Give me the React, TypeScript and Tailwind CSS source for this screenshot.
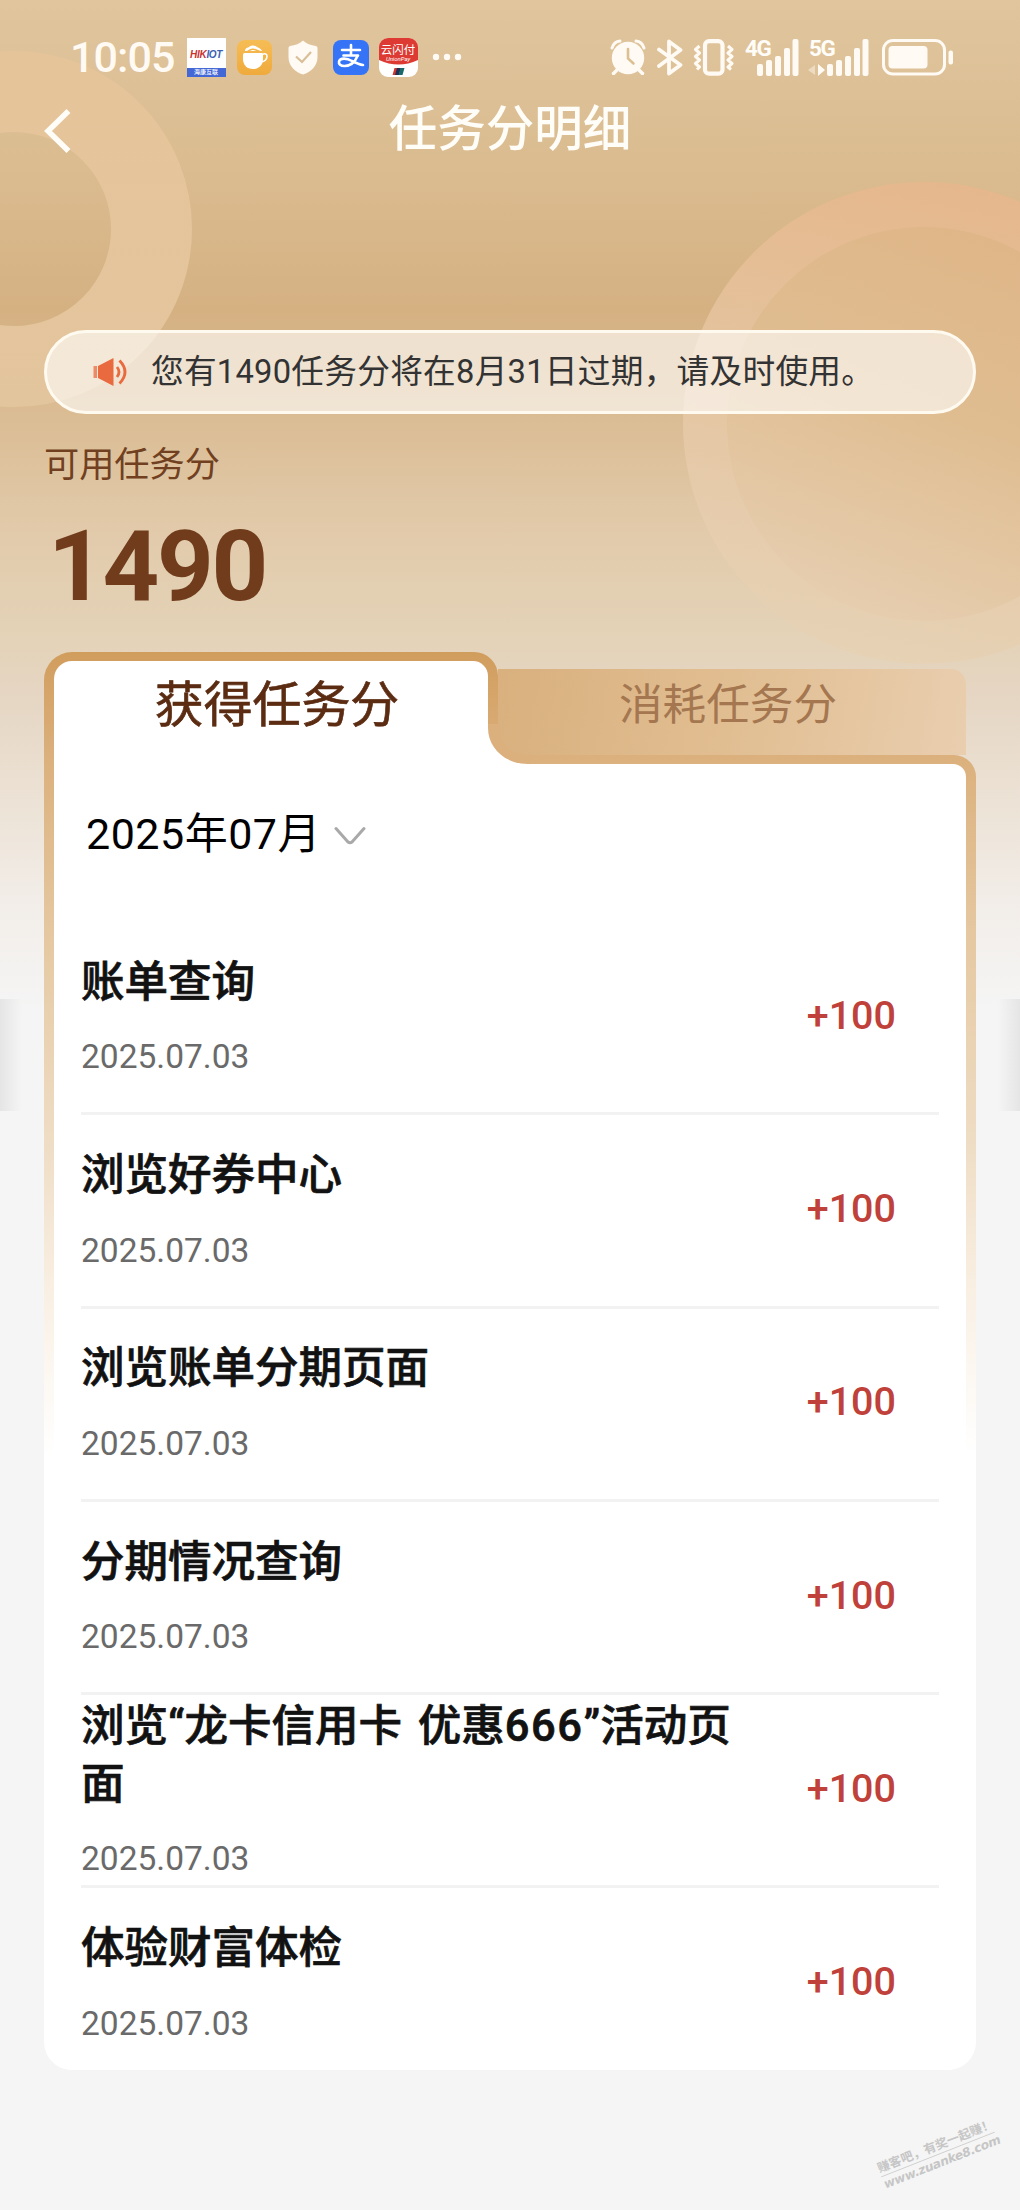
import React from "react";

const records = [
  { title: "账单查询", date: "2025.07.03", points: "+100" },
  { title: "浏览好券中心", date: "2025.07.03", points: "+100" },
  { title: "浏览账单分期页面", date: "2025.07.03", points: "+100" },
  { title: "分期情况查询", date: "2025.07.03", points: "+100" },
  { title: "浏览“龙卡信用卡 优惠666”活动页面", date: "2025.07.03", points: "+100" },
  { title: "体验财富体检", date: "2025.07.03", points: "+100" },
];

function AppBadges() {
  return (
    <div className="flex items-center">
      <div className="ml-[12px] flex h-[39px] w-[39px] flex-col overflow-hidden bg-white">
        <div className="flex h-[30px] items-center justify-center pt-[5px] font-['Liberation_Sans'] text-[10px] font-bold italic leading-none tracking-[-0.3px]">
          <span className="text-[#c8332f]">HIK</span>
          <span className="text-[#3a62b4]">IOT</span>
        </div>
        <div className="flex h-[9px] items-center justify-center bg-[#4368d6] text-[6px] font-medium leading-none text-white">海康互联</div>
      </div>
      <svg className="ml-[11px]" width="35" height="35" viewBox="0 0 35 35">
        <defs>
          <linearGradient id="cup" x1="0" y1="0" x2="0" y2="1">
            <stop offset="0" stopColor="#f6bd55" />
            <stop offset="1" stopColor="#efaa3c" />
          </linearGradient>
        </defs>
        <rect width="35" height="35" rx="8" fill="url(#cup)" />
        <path d="M8 11c0-3 3-3.500 4-4 2-2 6-2 8 0 2 1 4 1.500 5 4z" fill="#fff" />
        <path d="M8 12q3-.5 5-2 3-1.500 6 0 3 1.500 6 2" stroke="#f3b54b" strokeWidth="1.500" fill="none" />
        <path d="M6 14.500q0-1.500 1.500-1.500h17q1.500 0 1.500 1.500V19c0 6-4 10-10 10S6 25 6 19z" fill="#fff" />
        <path d="M25 14.500c3-1.500 5.200-.5 5 2-.2 2.500-2.500 5-6 5.500" stroke="#fff" strokeWidth="1.600" fill="none" />
      </svg>
      <svg className="ml-[16px]" width="30" height="35" viewBox="0 0 30 35">
        <path d="M15 .500C18 3.500 23 5.500 28 6q1.500.300 1.500 2V17C29.500 26 23 32 15 34.500 7 32 .5 26 .5 17V8q0-1.700 1.500-2C7 5.500 12 3.500 15 .500z" fill="#fffaf3" />
        <path d="M8 16.500l6 5.500 9-10" stroke="#d9bf99" strokeWidth="2.200" fill="none" />
      </svg>
      <div className="ml-[15px] flex h-[35px] w-[36px] items-center justify-center rounded-[8px] bg-[#3574f6]">
        <svg width="28" height="28" viewBox="0 0 28 28" fill="none" stroke="#fff" strokeLinecap="round">
          <path d="M5 7h18M14 2v10.500M6.500 12.500h14.500" strokeWidth="2.600" />
          <path d="M20.500 13C18 19 13 23 7.500 23 3.500 23 1.500 21 2 18.500c1-4 8-3.500 13-.5 4 2 7 3.500 11 4" strokeWidth="2.600" />
        </svg>
      </div>
      <div className="relative ml-[10px] flex h-[39px] w-[39px] flex-col items-center overflow-hidden rounded-[9px] bg-white">
        <svg className="absolute left-0 top-0" width="39" height="39" viewBox="0 0 39 39">
          <path d="M0 0h39v22q-19.500 9-39 0z" fill="#dc3a32" />
          <path d="M15.500 30h4l-2 7h-4z" fill="#d0342c" />
          <path d="M18 30h4l-2 7h-4z" fill="#1d2f55" />
          <path d="M21.500 30h4l-2 7h-4z" fill="#17696a" />
        </svg>
        <span className="relative mt-[6px] whitespace-nowrap text-[11.500px] leading-[12px] text-white">云闪付</span>
        <span className="relative text-[6px] italic leading-[5px] text-white">UnionPay</span>
      </div>
      <svg className="ml-[14px]" width="30" height="8" viewBox="0 0 30 8" fill="#fffaf3">
        <circle cx="4" cy="4" r="3.200" />
        <circle cx="15" cy="4" r="3.200" />
        <circle cx="26" cy="4" r="3.200" />
      </svg>
    </div>
  );
}

function SignalBars() {
  return (
    <svg width="42" height="37" viewBox="0 0 42 37" fill="#fffaf3">
      <rect x="0" y="25" width="6" height="12" rx="2" />
      <rect x="9" y="21" width="6" height="16" rx="2" />
      <rect x="18" y="17" width="6" height="20" rx="2" />
      <rect x="27" y="9" width="6" height="28" rx="2" />
      <rect x="35.500" y="0" width="6" height="37" rx="2" />
    </svg>
  );
}

function SystemIcons() {
  return (
    <div className="flex items-center">
      <svg width="36" height="36" viewBox="0 0 36 36">
        <circle cx="18" cy="19" r="16.200" fill="#fffaf3" />
        <path d="M2 9Q4 2.500 10 2M34 9Q32 2.500 26 2" stroke="#fffaf3" strokeWidth="3" fill="none" strokeLinecap="round" />
        <path d="M7 31l-3.500 3.500M29 31l3.500 3.500" stroke="#fffaf3" strokeWidth="3.500" strokeLinecap="round" />
        <path d="M18 10v9.500l5.500 5" stroke="#dcc094" strokeWidth="2.600" fill="none" strokeLinecap="round" />
      </svg>
      <svg className="ml-[11px]" width="26" height="37" viewBox="0 0 26 37" fill="none" stroke="#fffaf3" strokeWidth="3.800" strokeLinejoin="round" strokeLinecap="round">
        <path d="M2 10.500L23.500 26 12 34.500V2.500L23.500 11 2 27" />
      </svg>
      <svg className="ml-[10px]" width="41" height="37" viewBox="0 0 41 37" fill="none" stroke="#fffaf3">
        <rect x="12" y="2.200" width="17.500" height="32.500" rx="4" strokeWidth="4.200" />
        <path d="M6.500 7L2.500 10.500 6.500 14 2.500 17.500 6.500 21 2.500 24.500 6.500 28 4 30.500M35 7l4 3.500L35 14l4 3.500L35 21l4 3.500L35 28l3 2.500" strokeWidth="3" strokeLinejoin="round" />
      </svg>
      <div className="relative ml-[23px] h-[37px] w-[42px]">
        <span className="absolute -left-[12px] -top-[1px] font-['Roboto'] text-[22.500px] font-bold leading-[21px] tracking-[-1.500px]">4G</span>
        <SignalBars />
      </div>
      <div className="relative ml-[28px] h-[37px] w-[42px]">
        <span className="absolute -left-[18px] -top-[1px] font-['Roboto'] text-[22.500px] font-bold leading-[21px] tracking-[-1.500px]">5G</span>
        <svg className="absolute -left-[19px] top-[25px]" width="17" height="12" viewBox="0 0 17 12">
          <path d="M7 1v10L0 6z" fill="#fffaf3" opacity="0.45" />
          <path d="M10 0l7 6-7 6z" fill="#fffaf3" />
        </svg>
        <SignalBars />
      </div>
      <svg className="ml-[13px]" width="72" height="37" viewBox="0 0 72 37">
        <rect x="1.500" y="1.500" width="61" height="33.500" rx="9.500" stroke="#fffaf3" strokeWidth="3" fill="none" />
        <rect x="6.500" y="7" width="39" height="22.500" rx="4" fill="#fffaf3" />
        <rect x="66.500" y="11.500" width="4.500" height="14" rx="2" fill="#fffaf3" />
      </svg>
    </div>
  );
}

function Decoration() {
  return (
    <svg className="absolute left-0 top-0" width="1020" height="700" viewBox="0 0 1020 700">
      <defs>
        <linearGradient id="ringLeft" x1="0" y1="51" x2="0" y2="407" gradientUnits="userSpaceOnUse">
          <stop offset="0" stopColor="#e6c49a" />
          <stop offset="1" stopColor="#e3c59d" />
        </linearGradient>
        <linearGradient id="ringRight" x1="960" y1="182" x2="860" y2="664" gradientUnits="userSpaceOnUse">
          <stop offset="0" stopColor="#e6b78c" />
          <stop offset="0.400" stopColor="#e4c29c" />
          <stop offset="0.750" stopColor="#e6ccac" />
          <stop offset="1" stopColor="#e6d2b6" />
        </linearGradient>
        <linearGradient id="discRight" x1="1000" y1="240" x2="860" y2="620" gradientUnits="userSpaceOnUse">
          <stop offset="0" stopColor="#dfb688" />
          <stop offset="0.450" stopColor="#dfbd91" />
          <stop offset="0.800" stopColor="#e4c8a5" />
          <stop offset="1" stopColor="#e6ceb0" />
        </linearGradient>
      </defs>
      <circle cx="14" cy="229" r="137.500" fill="none" stroke="url(#ringLeft)" strokeWidth="81" />
      <circle cx="924" cy="423" r="241" fill="url(#ringRight)" />
      <circle cx="924" cy="424" r="197" fill="url(#discRight)" />
    </svg>
  );
}

function Tabs() {
  return (
    <div className="relative z-10 flex h-[103px] items-end">
      <div className="h-[103px] w-[454px] rounded-tl-[28px] rounded-tr-[24px] bg-[linear-gradient(180deg,#d19d5d_0%,#dbb07c_100%)] px-[10px] pt-[9px]">
        <button className="flex h-[106px] w-full items-center justify-center rounded-tl-[18px] rounded-tr-[15px] bg-white pb-[16px] pl-[12px] text-[48.900px] leading-none text-[#5b2c12] [-webkit-text-stroke:0.7px_#5b2c12]">
          获得任务分
        </button>
      </div>
      <button className="flex h-[86px] w-[468px] items-center justify-center rounded-tr-[15px] bg-[linear-gradient(100deg,#d9b07e_0%,#e1be92_50%,#e9ceaf_100%)] pb-[12px] pr-[8px] text-[43.600px] leading-none text-[#a47750]">
        消耗任务分
      </button>
      <svg className="absolute left-[444px] top-[72px]" width="42" height="40" viewBox="0 0 42 40">
        <path d="M0 0H10V4C10 20 22 30.500 40 30.500H42V40H0z" fill="#dbb07d" />
        <path d="M0 0V4C0 24 17 40 40 40H0z" fill="#fff" />
      </svg>
    </div>
  );
}

function RecordTitle({ text }: { text: string }) {
  return (
    <h2 className="break-all text-[43.500px] font-medium leading-[57.500px] [word-spacing:5px] [-webkit-text-stroke:0.7px_#121212]">
      {text.split(/(\d+)/).map((part, i) =>
        /^\d+$/.test(part) ? (
          <span key={i} className="tracking-[1.500px]">{part}</span>
        ) : (
          part
        ),
      )}
    </h2>
  );
}

export default function App() {
  return (
    <div className="relative flex h-[2210px] w-[1020px] flex-col overflow-hidden bg-[#f5f5f5] bg-[linear-gradient(180deg,#e0c59d_0px,#dabb8f_180px,#d5b182_310px,#dbbd95_420px,#e2cbac_540px,#e4d3b8_640px,#e5d5c2_690px,#ece2d5_800px,#f2ede8_900px,#f5f5f5_1010px)] font-['Roboto','Noto_Sans_CJK_SC',sans-serif] text-[#fffdf8]">
      <Decoration />

      <header className="relative flex h-[114px] items-center justify-between pl-[70px] pr-[66px]">
        <div className="flex items-center">
          <span className="text-[43px] font-medium leading-none tracking-[-0.900px] text-[#fffaf3]">10:05</span>
          <AppBadges />
        </div>
        <SystemIcons />
      </header>

      <div className="relative -mt-[14px] flex h-[60px] items-center justify-center">
        <svg className="absolute left-[44px] top-[9px]" width="28" height="44" viewBox="0 0 28 44" fill="none" stroke="#fffdf8" strokeWidth="5.500">
          <path d="M24.500 2L4 22l20.500 20" />
        </svg>
        <h1 className="text-[48.500px] font-medium leading-none">任务分明细</h1>
      </div>

      <div className="relative mx-[44px] mt-[170px] flex h-[84px] items-center rounded-full border-[3px] border-[#fffaf0] bg-white/60 pl-[46px] text-[32.700px] leading-none tracking-[0.250px] text-[#333333]">
        <svg width="36" height="30" viewBox="0 0 36 30">
          <rect x="0.500" y="9" width="3.500" height="12" fill="#ee8a66" />
          <path d="M5 9L20.500 1v28L5 21z" fill="#e96a3e" />
          <path d="M24 10q4 5 0 10M26.500 3.500q11 11.500 0 23" stroke="#e96a3e" strokeWidth="2.800" fill="none" />
        </svg>
        <span className="ml-[22px] whitespace-nowrap">您有1490任务分将在8月31日过期，请及时使用。</span>
      </div>

      <p className="relative ml-[44px] mt-[29px] h-[44px] text-[35.200px] leading-[44px] text-[#704020]">可用任务分</p>
      <p className="relative ml-[48px] mt-[29px] h-[100px] text-[99px] font-bold leading-[100px] tracking-[-2.300px] text-[#703c1c]">1490</p>

      <main className="relative mx-[44px] mt-[36px] flex flex-col text-[#121212]">
        <Tabs />
        <section className="h-[1315px] overflow-hidden rounded-b-[28px] rounded-tr-[22px] bg-[linear-gradient(180deg,#dbb07c_0px,#e5c8a1_180px,#eedcc3_380px,#f9f0e4_540px,#ffffff_700px)] px-[10px] pt-[9px]">
          <div className="h-full rounded-tr-[13px] bg-white px-[27px]">
            <button className="ml-[5px] flex h-[140px] items-center text-[43px] leading-none tracking-[0.500px] text-black">
              2025年07月
              <svg className="ml-[13px] mt-[4px]" width="32" height="20" viewBox="0 0 32 20" fill="none" stroke="#a9a9a9" strokeWidth="3" strokeLinecap="round" strokeLinejoin="round">
                <path d="M2 2.500l12 13.500q2 1.500 4 0L30 2.500" />
              </svg>
            </button>
            <ul className="mt-[18px]">
              {records.map((record) => (
                <li key={record.title} className="flex h-[193.250px] items-center justify-between border-b-[3px] border-[#f2f2f2] pb-[3px] last:border-transparent">
                  <div className="w-[662px]">
                    <RecordTitle text={record.title} />
                    <p className="mt-[26px] text-[33.500px] leading-[40px] text-[#6a6a6a]">{record.date}</p>
                  </div>
                  <span className="mr-[43px] text-[39.500px] font-medium leading-none text-[#c0403a]">{record.points}</span>
                </li>
              ))}
            </ul>
          </div>
        </section>
      </main>

      <div className="absolute left-0 top-[999px] h-[112px] w-[22px] bg-gradient-to-r from-[#e5e5e5] to-transparent" />
      <div className="absolute right-0 top-[999px] h-[112px] w-[22px] bg-gradient-to-l from-[#e5e5e5] to-transparent" />

      <div className="absolute left-[877px] top-[2137px] w-[122px] rotate-[-21.500deg] whitespace-nowrap text-center font-bold text-[#c6c6c6]">
        <p className="border-b border-[#cccccc] text-[12.400px] leading-[17px]">赚客吧，有奖一起赚！</p>
        <p className="font-['DejaVu_Sans'] text-[12.300px] italic leading-[17px] tracking-[-0.300px]">www.zuanke8.com</p>
      </div>
    </div>
  );
}
